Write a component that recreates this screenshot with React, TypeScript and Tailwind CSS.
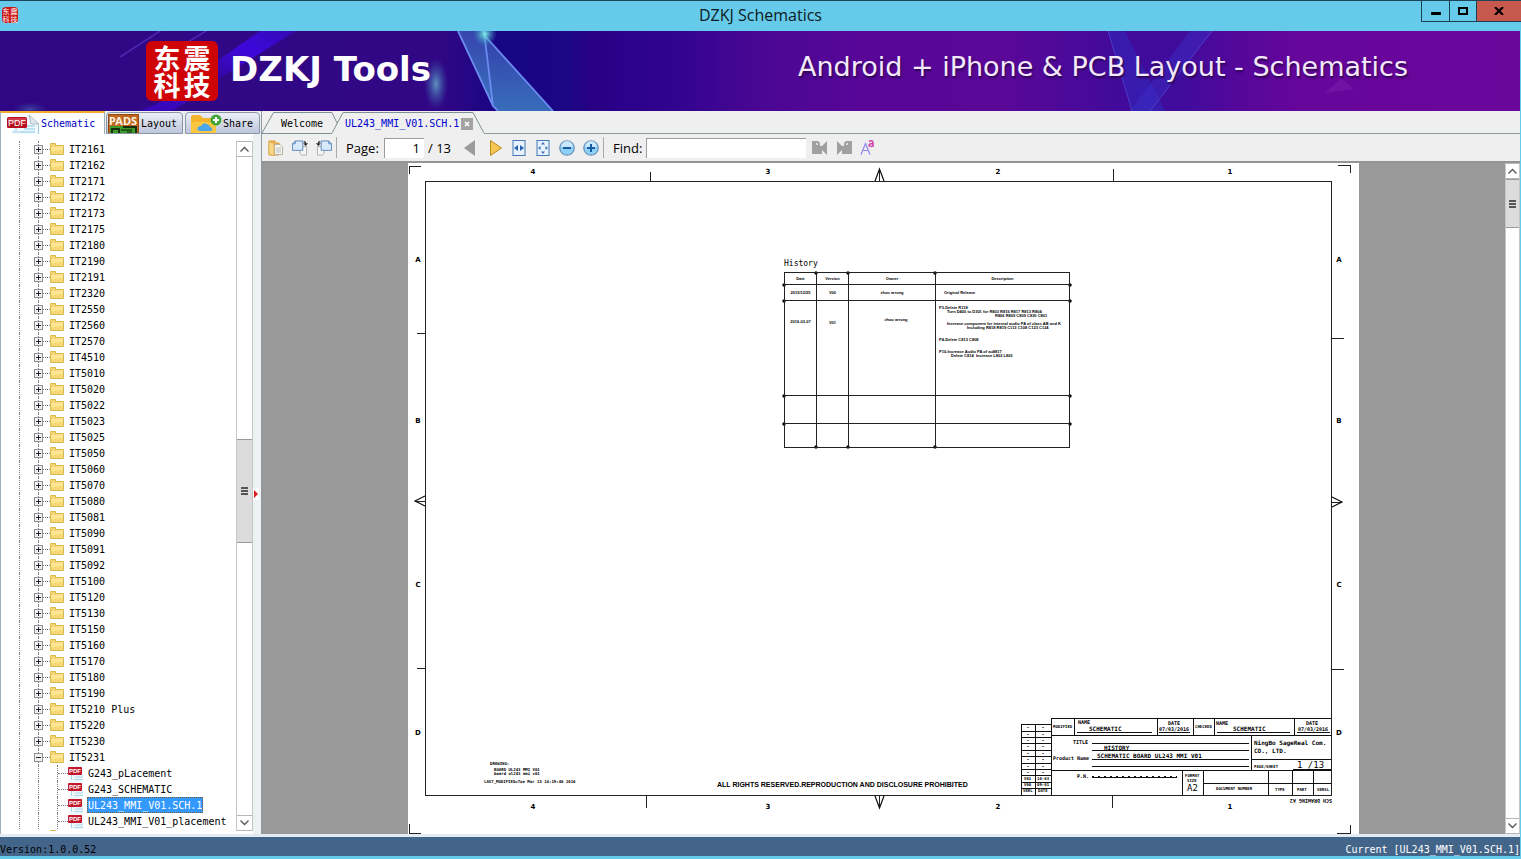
import { useState } from 'react'

const FOLDERS = [
    'IT2161', 'IT2162', 'IT2171', 'IT2172', 'IT2173', 'IT2175', 'IT2180', 'IT2190', 'IT2191', 'IT2320',
    'IT2550', 'IT2560', 'IT2570', 'IT4510', 'IT5010', 'IT5020', 'IT5022', 'IT5023', 'IT5025', 'IT5050',
    'IT5060', 'IT5070', 'IT5080', 'IT5081', 'IT5090', 'IT5091', 'IT5092', 'IT5100', 'IT5120', 'IT5130',
    'IT5150', 'IT5160', 'IT5170', 'IT5180', 'IT5190', 'IT5210 Plus', 'IT5220', 'IT5230', 'IT5231',
]

const FILES = ['G243_pLacement', 'G243_SCHEMATIC', 'UL243_MMI_V01.SCH.1', 'UL243_MMI_V01_placement']

const NOTES: { text: string, indent: string }[] = [
    { text: 'P3-Delete R118', indent: '' },
    { text: 'Turn D400 to D301 for R803 R816 R817 R813 R804', indent: 'pl-2' },
    { text: 'R806 R809 C809 C830 C801', indent: 'pl-14' },
    { text: '', indent: '' },
    { text: 'Increase component for internal audio PA of class AB and K', indent: 'pl-2' },
    { text: 'Including R818 R819 C113 C108 C123 C124', indent: 'pl-7' },
    { text: '', indent: '' },
    { text: '', indent: '' },
    { text: 'P4-Delete C813 C808', indent: '' },
    { text: '', indent: '' },
    { text: '', indent: '' },
    { text: 'P10-Increase Audio PA of au8817', indent: '' },
    { text: 'Delete C814  Increase L802 L803', indent: 'pl-3' },
]

/* ---------- icons ---------- */

const FolderIcon = () => (
    <svg width="14" height="14" viewBox="0 0 14 14" className="shrink-0" aria-hidden="true">
        <path d="M.5 2.500V1.500H5.500V3.500H13.500V12.500H.5Z" fill="#f3d673" stroke="#dcb850" />
        <path d="M1 5.500 13 4V12H1Z" fill="#fbe694" />
        <path d="M1 9 13 7.500V12H1Z" fill="#f5da77" />
    </svg>
)

const PdfFileIcon = () => (
    <svg width="15" height="16" viewBox="0 0 15 16" className="shrink-0" aria-hidden="true">
        <path d="M3 10V16H15V1L12 0H4Z" fill="#eef7fb" />
        <path d="M3.500 10V15M7 12H15M6 14.500H15" stroke="#a9d7ea" fill="none" />
        <rect x="0" y="2" width="14" height="8" rx="1" fill="#c3172b" />
        <text x="7" y="8" fontSize="6" fontWeight="700" textAnchor="middle" fill="#fff" className="font-['Liberation_Sans',sans-serif]">PDF</text>
    </svg>
)

const PdfTabIcon = () => (
    <svg width="33" height="20" viewBox="0 0 33 20" aria-hidden="true">
        <path d="M6 0H23L32 9V20H6Z" fill="#f2f8fb" />
        <path d="M22 1 32 10H24Z" fill="#dfe7ec" stroke="#9fb0ba" strokeWidth=".8" />
        <path d="M31.500 10V20M9 13V17M5 18H16" stroke="#9ccce4" fill="none" />
        <path d="M16 12H28M17 15H28M14 18H28" stroke="#a9d8ef" strokeWidth="1.500" />
        <rect x="0" y="3" width="20" height="11" rx="1.500" fill="#b80f1e" />
        <path d="M1 4H19V8Q10 9 1 8Z" fill="#d23c47" />
        <text x="10" y="12" fontSize="9" textAnchor="middle" fill="#fff" className="font-['Liberation_Sans',sans-serif]">PDF</text>
    </svg>
)

const PadsIcon = () => (
    <svg width="31" height="19" viewBox="0 0 31 19" aria-hidden="true">
        <rect x=".5" y=".5" width="30" height="19" fill="#c0661f" stroke="#8f4a12" />
        <rect x="2" y="12" width="27" height="7" fill="#3f9a2c" />
        <path d="M4 19V15H11V19M15 13H28V19" fill="none" stroke="#15300f" strokeWidth="2" />
        <path d="M13 16H24M19 18H24" stroke="#1c4a14" strokeWidth="1.500" />
        <text x="15" y="11" fontSize="11" fontWeight="700" textAnchor="middle" fill="#fdf3e0" className="font-['Noto_Sans',sans-serif]">PADS</text>
    </svg>
)

const ShareIcon = () => (
    <svg width="32" height="19" viewBox="0 0 32 19" aria-hidden="true">
        <path d="M1 3Q1 1 3 1H10L13 4H24Q26 4 26 6V19H1Z" fill="#f4b52c" />
        <path d="M1 8H26V19H3Q1 19 1 17Z" fill="#fbc740" />
        <path d="M10 17Q7 17 7.500 14Q8 12 11 12Q13 8 17 10Q20 11 20 13Q23 14 22 16Q22 17 20 17Z" fill="#4aa7ee" />
        <circle cx="26" cy="6" r="5.500" fill="#43a638" />
        <path d="M26 3V9M23 6H29" stroke="#fff" strokeWidth="2" />
    </svg>
)

const OpenIcon = () => (
    <svg width="16" height="16" viewBox="0 0 16 16" aria-hidden="true">
        <path d="M1 1H7V3H11V15H1Z" fill="#f0bd5c" stroke="#d39a33" />
        <path d="M6.500 4.500H12L14.500 7V14.500H6.500Z" fill="#f9f6ec" stroke="#b7b3a5" />
        <path d="M8 8H13M8 10H13M8 12H13" stroke="#b5bccb" />
        <path d="M1 1 6 4V16L1 14Z" fill="#f8d889" stroke="#d8a445" strokeWidth=".7" />
    </svg>
)

const RotateIcon = ({ left = false }: { left?: boolean }) => (
    <svg width="17" height="16" viewBox="0 0 17 16" className={left ? '-scale-x-100' : ''} aria-hidden="true">
        <path d="M8.500 6.500H15.500V15.500H10L8.500 13.500Z" fill="#f5f6f8" stroke="#a9adb5" />
        <path d="M3.500 .5H11.500V10.500H.5V3.500Z" fill="#d7eafb" stroke="#5c86b8" />
        <path d="M.5 3.500H3.500V.5" fill="none" stroke="#5c86b8" />
        <path d="M12.500 1.500H13.500Q14.500 1.500 14.500 3" fill="none" stroke="#222" strokeWidth="1.200" />
        <path d="M12 3H17L14.500 6Z" fill="#222" />
    </svg>
)

const FitIcon = ({ page = false }: { page?: boolean }) => (
    <svg width="14" height="16" viewBox="0 0 14 16" aria-hidden="true">
        <rect x="1" y=".5" width="12" height="15" fill="#e6f2fd" stroke="#4478b8" />
        {page ? (
            <path d="M7 2 9 4.500H5ZM7 14 9 11.500H5ZM2 8 4.500 6V10ZM12 8 9.500 6V10Z" fill="#3b74bd" />
        ) : (
            <path d="M2 8 6 5V11ZM12 8 8 5V11Z" fill="#2b62b0" />
        )}
    </svg>
)

const ZoomIcon = ({ plus = false }: { plus?: boolean }) => (
    <svg width="16" height="16" viewBox="0 0 16 16" aria-hidden="true">
        <circle cx="8" cy="8" r="7.200" fill="#8fd0f8" stroke="#6d93bb" strokeWidth="1.300" />
        <path d="M2 7A6 6 0 0 1 14 7Z" fill="#c8e8fc" />
        <path d={plus ? 'M4 8H12M8 4V12' : 'M4 8H12'} stroke="#155a9f" strokeWidth="2" />
    </svg>
)

const FindIcon = ({ next = false }: { next?: boolean }) => (
    <svg width="16" height="15" viewBox="0 0 16 15" className={next ? '-scale-x-100' : ''} aria-hidden="true">
        <path d="M0 1H6L8 3V6H10L15 1V15L10 10V14H0Z" fill="#a0a0a0" />
        <circle cx="5" cy="4" r="1" fill="#efefef" />
    </svg>
)

const MatchCaseIcon = () => (
    <svg width="15" height="17" viewBox="0 0 15 17" aria-hidden="true">
        <path d="M1 15.500 5.500 4.500 10 15.500M3 11.500H8" fill="none" stroke="#8f86ee" strokeWidth="1.200" />
        <path d="M9 2.500Q12.500 .5 13 3.500V8M13 4.500Q9 4.500 9 6.500Q10 8.500 13 6.500" fill="none" stroke="#cf3fa8" strokeWidth="1.500" />
    </svg>
)

const Chevron = ({ down = false }: { down?: boolean }) => (
    <svg width="9" height="6" viewBox="0 0 9 6" aria-hidden="true">
        <path d={down ? 'M.5 .5 4.500 4.500 8.500 .5' : 'M.5 5.500 4.500 1.500 8.500 5.500'} fill="none" stroke="#555" strokeWidth="1.300" />
    </svg>
)

/* ---------- window parts ---------- */

const TitleBar = () => (
    <header className="flex h-[31px] shrink-0 items-start border-t border-[#1d4459] bg-[#66caea]">
        <div className="flex w-[100px] shrink-0 pt-1.5 pl-0.5">
            <div className="grid size-4 grid-cols-2 place-items-center rounded-sm bg-[#cb1517] font-['Noto_Sans_CJK_SC',sans-serif] text-[7px] leading-[7px] text-white">
                <span>东</span><span>震</span><span>科</span><span>技</span>
            </div>
        </div>
        <h1 className="flex-1 pt-1 text-center font-['Open_Sans',sans-serif] text-[16px] leading-5 text-[#0c1a22]">DZKJ Schematics</h1>
        <div className="flex h-[21px] w-[100px] shrink-0 border-b border-l border-[#1c3f50]">
            <button aria-label="Minimize" className="flex w-7 items-center justify-center border-r border-[#1c3f50]">
                <span className="mt-1 h-[3px] w-2.5 bg-black" />
            </button>
            <button aria-label="Maximize" className="flex w-[27px] items-center justify-center border-r border-[#1c3f50]">
                <span className="h-2 w-2.5 border-2 border-black" />
            </button>
            <button aria-label="Close" className="flex flex-1 items-center justify-center bg-[#c6584e]">
                <svg width="10" height="8" viewBox="0 0 10 8"><path d="M1 0 9 8M9 0 1 8" stroke="#000" strokeWidth="2.200" /></svg>
            </button>
        </div>
    </header>
)

const Banner = () => (
    <div className="relative h-20 shrink-0 overflow-hidden bg-[linear-gradient(90deg,#2f0785_0px,#310785_440px,#170583_500px,#1c0785_570px,#270085_590px,#320490_680px,#4a0793_760px,#570698_860px,#5b0798_1000px,#430a9a_1110px,#3f0c9c_1180px,#55079a_1240px,#66069b_1300px,#6b069b_1521px)]">
        <svg width="1521" height="80" viewBox="0 0 1521 80" className="absolute inset-0" aria-hidden="true">
            <defs>
                <linearGradient id="shard" x1="0" y1="0" x2="0" y2="1">
                    <stop offset="0" stopColor="#3b4fb5" />
                    <stop offset="1" stopColor="#3f87c8" />
                </linearGradient>
                <radialGradient id="glow">
                    <stop offset="0" stopColor="#7df0e6" />
                    <stop offset="1" stopColor="#2f8fc0" stopOpacity="0" />
                </radialGradient>
                <linearGradient id="ray" x1="1" y1="0" x2="0" y2="1">
                    <stop offset="0" stopColor="#3a0be0" stopOpacity=".5" />
                    <stop offset=".5" stopColor="#3d08dc" />
                    <stop offset="1" stopColor="#3d08dc" stopOpacity=".3" />
                </linearGradient>
            </defs>
            <path d="M296 0 217 49V30L260 0Z" fill="url(#ray)" />
            <path d="M140 80 165 69H190L172 80Z" fill="#3d08dc" opacity=".6" />
            <path d="M206 0 150 34M160 0 120 26" stroke="#5b3fd0" strokeWidth="1.500" opacity=".6" />
            <ellipse cx="436" cy="53" rx="12" ry="26" fill="url(#glow)" opacity=".6" />
            <ellipse cx="30" cy="78" rx="18" ry="7" fill="url(#glow)" opacity=".25" />
            <path d="M458 0H484L493 75Z" fill="url(#shard)" opacity=".85" />
            <path d="M485 5 553 80H498L493 75Z" fill="url(#shard)" opacity=".8" />
            <path d="M458 0 493 75 498 80M484 0 493 75M485 5 553 80" fill="none" stroke="#6a8cf0" strokeWidth="1.800" />
            <circle cx="485" cy="3" r="12" fill="url(#glow)" />
            {/* streaks behind the tagline */}
            <path d="M1108 0 1132 80H1165L1125 0Z" fill="#2f2fc8" opacity=".45" />
            <path d="M1190 0 1130 80H1150L1212 0Z" fill="#3a2cc4" opacity=".5" />
            <path d="M1108 0 1132 80M1212 0 1150 80" stroke="#5a56dc" opacity=".6" />
            <path d="M1325 62 1341 47 1354 58Z" fill="#8526b4" opacity=".4" />
        </svg>
        <div className="relative flex h-full items-center justify-between pr-[112px] pl-[146px]">
            <div className="flex items-center gap-3">
                <div className="grid h-[60px] w-[72px] grid-cols-2 place-items-center rounded-md bg-[#cf0407] px-1.5 py-[3px] font-['Noto_Sans_CJK_SC',sans-serif] text-[27px] leading-[27px] font-bold text-white">
                    <span>东</span><span>震</span><span>科</span><span>技</span>
                </div>
                <p className="pb-1 font-['DejaVu_Sans',sans-serif] text-[34px] leading-10 font-bold text-white">DZKJ Tools</p>
            </div>
            <p className="pb-2 font-['DejaVu_Sans',sans-serif] text-[27px] leading-9 text-[#f3e9fa] [text-shadow:1px_2px_2px_#2b0350]">Android + iPhone &amp; PCB Layout - Schematics</p>
        </div>
    </div>
)

const ScrollBar = ({ before, thumb, className }: { before: string, thumb: string, className: string }) => (
    <div className={`flex shrink-0 flex-col border-x border-[#c4c6c8] bg-white ${className}`}>
        <button aria-label="Scroll up" className="flex h-4 shrink-0 items-center justify-center border-y border-[#b5b7b9]"><Chevron /></button>
        <div className={before} />
        <div className={`flex shrink-0 flex-col items-center justify-center gap-px border-y border-[#9a9a9a] bg-[#dcdcdc] ${thumb}`}>
            <span className="h-0.5 w-[7px] bg-[#555]" />
            <span className="h-0.5 w-[7px] bg-[#555]" />
            <span className="h-0.5 w-[7px] bg-[#555]" />
        </div>
        <div className="flex-1" />
        <button aria-label="Scroll down" className="flex h-4 shrink-0 items-center justify-center border-y border-[#b5b7b9]"><Chevron down /></button>
    </div>
)

const Tree = () => {
    const [selected, setSelected] = useState<string>('UL243_MMI_V01.SCH.1')

    return (
        <ul className="min-w-0 flex-1 overflow-hidden text-[10px] leading-4 text-black">
            {FOLDERS.map((name) => (
                <li key={name} className="flex h-4 items-center">
                    <span className="h-4 w-5 shrink-0 border-r border-dotted border-[#808080]" />
                    <span className="relative h-4 w-[19px] shrink-0 border-r border-dotted border-[#808080]">
                        <button aria-label={`Toggle ${name}`} className="absolute top-1 left-3.5 size-[9px] border border-[#919191] bg-[#f0f0f0]">
                            <span className="absolute inset-x-px top-[3px] h-px bg-[#223]" />
                            {name !== 'IT5231' && <span className="absolute inset-y-px left-[3px] w-px bg-[#223]" />}
                        </button>
                    </span>
                    <span className="h-px w-[11px] shrink-0 border-t border-dotted border-[#808080]" />
                    <FolderIcon />
                    <span className="pt-px pl-[5px] whitespace-pre">{name}</span>
                </li>
            ))}
            {FILES.map((name) => (
                <li key={name} className="flex h-4 items-center">
                    <span className="h-4 w-5 shrink-0 border-r border-dotted border-[#808080]" />
                    <span className="h-4 w-[19px] shrink-0 border-r border-dotted border-[#808080]" />
                    <span className="h-4 w-[19px] shrink-0 border-r border-dotted border-[#808080]" />
                    <span className="h-px w-[10px] shrink-0 border-t border-dotted border-[#808080]" />
                    <PdfFileIcon />
                    <button
                        onClick={() => setSelected(name)}
                        className={`ml-1 h-4 border border-dotted leading-[15px] ${selected === name ? 'border-[#7a5a30] bg-[#3399ff] text-white' : 'border-transparent'}`}
                    >
                        {name}
                    </button>
                </li>
            ))}
            <li className="flex h-4 items-start pl-[50px]"><FolderIcon /></li>
        </ul>
    )
}

const Sidebar = () => (
    <aside className="flex w-[262px] shrink-0 flex-col border-r border-[#8d9aa3] bg-[#eeeff1]">
        <div className="flex h-[23px] shrink-0 items-end text-[10px]">
            <button className="flex h-[23px] w-[105px] items-center gap-px border-t-2 border-x border-t-[#f3ab2e] border-x-[#9fb0ba] bg-white pl-1.5 whitespace-nowrap text-[#0000c8]">
                <PdfTabIcon />
                Schematic
            </button>
            <button className="ml-px flex h-[22px] w-[77px] items-center gap-0.5 rounded-t-sm border border-[#8a97a8] bg-linear-to-b from-[#eceff6] to-[#bfc6dc] pt-px pl-px text-black">
                <PadsIcon />
                Layout
            </button>
            <button className="ml-0.5 flex h-[22px] w-[75px] items-center gap-px rounded-t-sm border border-[#8a97a8] bg-linear-to-b from-[#eceff6] to-[#bfc6dc] pt-px pl-1 text-black">
                <ShareIcon />
                Share
            </button>
        </div>
        <div className="flex min-h-0 flex-1">
            <div className="flex min-w-0 flex-1 border-l border-[#9fb0ba] bg-white pt-[7px] pb-[3px]">
                <div className="-ml-px flex min-w-0 flex-1"><Tree /></div>
                <ScrollBar className="w-[17px]" before="h-[282px] shrink-0" thumb="h-[104px]" />
            </div>
            <div className="flex w-2 shrink-0 items-center bg-[#eef1f2] pt-5">
                <svg width="6" height="12" viewBox="0 0 6 12" aria-hidden="true">
                    <rect width="6" height="12" fill="#fff" />
                    <path d="M1 2 5 6 1 10Z" fill="#dc1c1c" />
                </svg>
            </div>
        </div>
    </aside>
)

const Slope = ({ d, w }: { d: string, w: number }) => (
    <svg width={w} height="21" viewBox={`0 0 ${w} 21`} className="shrink-0" aria-hidden="true">
        <path d={d} fill="none" stroke="#7d9095" />
    </svg>
)

const DocTabs = () => (
    <div className="flex h-[23px] shrink-0 items-end bg-[#efefef] text-[10px]">
        <button className="flex border-b border-[#7d9095] text-black">
            <Slope w={12} d="M0 21 11.500 .5H12" />
            <span className="w-[58px] border-t border-[#7d9095] pt-0.5 pl-[7px] text-left leading-[18px]">Welcome</span>
        </button>
        <div className="relative flex pb-px">
            <Slope w={11} d="M0 21 11 .5M0 .5 5 11" />
            <button className="w-[117px] border-t border-[#7d9095] pt-0.5 pl-0.5 text-left leading-[18px] text-[#0000d0]">UL243_MMI_V01.SCH.1</button>
            <button aria-label="Close tab" className="flex w-[13px] items-center justify-center border-t border-[#7d9095] pt-0.5">
                <svg width="12" height="12" viewBox="0 0 12 12">
                    <rect width="12" height="12" fill="#a3a3a3" />
                    <path d="M4 4 8 8M8 4 4 8" stroke="#fff" strokeWidth="1.500" />
                </svg>
            </button>
            <Slope w={11} d="M0 .5 11 21" />
        </div>
        <div className="h-px flex-1 bg-[#8f9da1]" />
    </div>
)

const Toolbar = () => {
    const [page, setPage] = useState('1')
    const [find, setFind] = useState('')

    return (
        <div className="flex h-[29px] shrink-0 items-center border-b-2 border-[#949494] bg-[#efefef] pl-1.5 font-['Open_Sans',sans-serif] text-[13px] text-black">
            <div className="flex gap-2">
                <button aria-label="Open" className="flex w-4"><OpenIcon /></button>
                <button aria-label="Rotate right" className="flex w-4"><RotateIcon /></button>
                <button aria-label="Rotate left" className="flex w-4"><RotateIcon left /></button>
            </div>
            <span className="ml-1 h-[21px] w-px bg-[#a9a9a9]" />
            <label htmlFor="page" className="ml-[9px] w-[38px] pt-0.5">Page:</label>
            <input id="page" value={page} onChange={(e) => setPage(e.target.value)} className="h-5 w-10 border-t border-l border-[#9b9b9b] bg-white pr-1 text-right outline-none" />
            <span className="ml-1 w-9 pt-0.5 whitespace-nowrap">/ 13</span>
            <button aria-label="Previous page" className="flex w-3">
                <svg width="12" height="16" viewBox="0 0 12 16"><path d="M0 8 11 0V16Z" fill="#9b9b9b" /></svg>
            </button>
            <button aria-label="Next page" className="ml-3.5 flex w-3">
                <svg width="12" height="16" viewBox="0 0 12 16"><path d="M.5 .5 11.500 8 .5 15.500Z" fill="#f6c653" stroke="#b98a1c" /></svg>
            </button>
            <div className="ml-[9px] flex gap-2">
                <button aria-label="Fit width" className="flex w-4 justify-center"><FitIcon /></button>
                <button aria-label="Fit page" className="flex w-4 justify-center"><FitIcon page /></button>
                <button aria-label="Zoom out" className="flex w-4 justify-center"><ZoomIcon /></button>
                <button aria-label="Zoom in" className="flex w-4 justify-center"><ZoomIcon plus /></button>
            </div>
            <span className="ml-1 h-[21px] w-px bg-[#a9a9a9]" />
            <label htmlFor="find" className="ml-[9px] w-[33px] pt-0.5">Find:</label>
            <input id="find" value={find} onChange={(e) => setFind(e.target.value)} className="h-5 w-40 border-t border-l border-[#9b9b9b] bg-white px-1 outline-none" />
            <button aria-label="Find previous" className="ml-1.5 flex"><FindIcon /></button>
            <button aria-label="Find next" className="ml-2 flex"><FindIcon next /></button>
            <button aria-label="Match case" className="ml-2 flex"><MatchCaseIcon /></button>
        </div>
    )
}

/* ---------- schematic sheet ---------- */

const COLS: [number, string][] = [[533, '4'], [768, '3'], [998, '2'], [1230, '1']]
const ROWS: [number, string][] = [[262, 'A'], [423, 'B'], [587, 'C'], [735, 'D']]
const REVS = [724, 731, 737, 743, 750, 756, 763, 769]

// junction dots of the history table
const DOTS: [number, number][] = [
    [816, 273], [848, 273], [935, 273],
    [784, 285], [1070, 285], [784, 301], [1070, 301], [784, 396], [1070, 396], [784, 424], [1070, 424],
    [816, 447], [848, 447], [935, 447],
]

const SheetDrawing = () => (
    <svg width="951" height="671" viewBox="408 163 951 671" className="block font-['DejaVu_Sans_Mono',monospace]" fill="#000">
        <g fill="none" stroke="#222" shapeRendering="crispEdges">
            <path d="M409 174V166H421M1338 165H1350V173M409 824V833H421M1337 833H1350V825" />
            <rect x="425" y="181" width="906" height="614" />
            <path d="M650 172V181M1113 169V181M646 795V808M1112 795V808M879 169V181M879 795V808" />
            <path d="M417 333H425M417 668H425M1331 338H1344M1331 669H1344M415 501H425M1331 502H1342" />
        </g>
        <path d="M875 181 879.500 169 884 181M875 796 879.500 808 884 796M425 496 415 501 425 506M1332 497 1342 502 1332 507" fill="none" stroke="#111" strokeWidth="1.200" />

        <g fontSize="7" fontWeight="700" textAnchor="middle" className="font-['DejaVu_Sans',sans-serif]">
            {COLS.map(([x, n]) => (
                <g key={n}>
                    <text x={x} y="174">{n}</text>
                    <text x={x} y="809">{n}</text>
                </g>
            ))}
            {ROWS.map(([y, n]) => (
                <g key={n}>
                    <text x="418" y={y}>{n}</text>
                    <text x="1339" y={y}>{n}</text>
                </g>
            ))}
        </g>

        {DOTS.map(([x, y]) => <circle key={`${x}-${y}`} cx={x} cy={y} r="1.700" />)}

        {/* title block */}
        <g fill="none" stroke="#111" shapeRendering="crispEdges">
            <path d="M1021 795V724H1051M1035 724V795M1021 731H1051M1021 737H1051M1021 743H1051M1021 750H1051M1021 756H1051M1021 763H1051M1021 769H1051M1021 775H1051M1021 782H1051M1021 788H1051" />
            <path d="M1051 795V718H1331M1051 735H1331M1051 770H1331M1074 718V735M1157 718V735M1193 718V735M1214 718V735M1294 718V735" />
            <path d="M1251 735V770M1251 759H1331M1182 770V795M1203 770V795M1203 783H1331M1268 770V795M1292 770V795M1313 770V795" />
            <path d="M1077 732H1152M1159 732H1190M1217 732H1290M1297 732H1330M1092 743H1249M1092 750H1249M1092 759H1249M1092 766H1249M1293 769H1331" />
            <path d="M1092 777H1177" />
            <path d="M1092 776H1177" strokeDasharray="2 4" />
        </g>
        <g fontSize="5" fontWeight="700">
            {REVS.map((y) => (
                <g key={y} textAnchor="middle">
                    <text x="1028" y={y + 5}>-</text>
                    <text x="1043" y={y + 5}>-</text>
                </g>
            ))}
            <text x="1078" y="724">NAME</text>
            <text x="1168" y="725">DATE</text>
            <text x="1159" y="731">07/03/2016</text>
            <text x="1216" y="725">NAME</text>
            <text x="1306" y="725">DATE</text>
            <text x="1298" y="731">07/03/2016</text>
            <text x="1073" y="744">TITLE</text>
            <text x="1053" y="760">Product Name</text>
            <text x="1077" y="778">P.N.</text>
            <text x="1332" y="799" transform="rotate(180 1332 799)">SCH DRAWING A2</text>
        </g>
        <g fontSize="4" fontWeight="700">
            <text x="1024" y="780">V01</text>
            <text x="1037" y="780">10-03</text>
            <text x="1024" y="786">V00</text>
            <text x="1037" y="786">09-01</text>
            <text x="1023" y="792">VERL</text>
            <text x="1038" y="792">DATE</text>
            <text x="1053" y="728">MODIFIED</text>
            <text x="1195" y="728">CHECKED</text>
            <text x="1254" y="768">PAGE/SHEET</text>
            <text x="1185" y="777">FORMAT</text>
            <text x="1187" y="782">SIZE</text>
            <text x="1216" y="790">DOCUMENT NUMBER</text>
            <text x="1275" y="791">TYPE</text>
            <text x="1297" y="791">PART</text>
            <text x="1317" y="791">VERSL</text>
            <text x="490" y="765">DRAWING:</text>
            <text x="494" y="771">BOARD UL243 MMI V01</text>
            <text x="494" y="775">board ul243 mmi v01</text>
            <text x="484" y="783">LAST_MODIFIED=Tue Mar 15 14:19:46 2016</text>
        </g>
        <g fontSize="6" fontWeight="700">
            <text x="1089" y="731">SCHEMATIC</text>
            <text x="1233" y="731">SCHEMATIC</text>
            <text x="1104" y="750">HISTORY</text>
            <text x="1097" y="758">SCHEMATIC BOARD UL243 MMI V01</text>
            <text x="1254" y="745">NingBo SageReal Com.</text>
            <text x="1254" y="753">CO., LTD.</text>
        </g>
        <g fontSize="9">
            <text x="1187" y="791">A2</text>
            <text x="1297" y="768">1 /13</text>
        </g>
        <text x="717" y="787" fontSize="7" fontWeight="700" className="font-['Liberation_Sans',sans-serif]">ALL RIGHTS RESERVED.REPRODUCTION AND DISCLOSURE PROHIBITED</text>
    </svg>
)

const HistoryTable = () => (
    <table className="absolute top-[99px] left-[376px] w-[286px] table-fixed border-collapse font-['Liberation_Sans',sans-serif] text-[4px] leading-[4px] font-bold text-black [&_td]:border [&_td]:border-[#222] [&_td]:p-0 [&_th]:border [&_th]:border-[#222] [&_th]:p-0">
        <caption className="h-2.5 text-left font-['DejaVu_Sans_Mono',monospace] text-[8px] leading-[4px] font-normal">History</caption>
        <colgroup>
            <col className="w-8" />
            <col className="w-8" />
            <col className="w-[87px]" />
            <col />
        </colgroup>
        <thead>
            <tr className="h-3">
                <th>Date</th>
                <th>Version</th>
                <th>Owner</th>
                <th>Description</th>
            </tr>
        </thead>
        <tbody>
            <tr className="h-4 text-center">
                <td>2015/12/25</td>
                <td>V00</td>
                <td>zhou arrong</td>
                <td className="text-left"><div className="pl-2">Original Release</div></td>
            </tr>
            <tr className="h-[95px] text-center align-top">
                <td><div className="pt-[19px]">2016-03-07</div></td>
                <td><div className="pt-5">V01</div></td>
                <td><div className="pt-[17px] pl-2">zhou arrong</div></td>
                <td className="text-left">
                    <div className="pt-[5px] pl-[3px] whitespace-pre">
                        {NOTES.map((n, i) => <p key={i} className={`h-1 ${n.indent}`}>{n.text}</p>)}
                    </div>
                </td>
            </tr>
            <tr className="h-7"><td /><td /><td /><td /></tr>
            <tr className="h-6"><td /><td /><td /><td /></tr>
        </tbody>
    </table>
)

const Viewer = () => (
    <main className="flex min-w-0 flex-1 flex-col">
        <DocTabs />
        <Toolbar />
        <div className="flex min-h-0 flex-1">
            <div className="flex min-w-0 flex-1 items-start justify-center overflow-hidden bg-[#999]">
                <div className="relative shrink-0 bg-white">
                    <SheetDrawing />
                    <HistoryTable />
                </div>
            </div>
            <ScrollBar className="w-[15px]" before="h-0" thumb="h-[49px]" />
        </div>
    </main>
)

const App = () => {
    return (
        <div className="flex h-screen flex-col overflow-hidden bg-[#66caea] font-['DejaVu_Sans_Mono',monospace]">
            <TitleBar />
            <div className="mr-px flex min-h-0 flex-1 flex-col">
                <Banner />
                <div className="flex min-h-0 flex-1">
                    <Sidebar />
                    <Viewer />
                </div>
                <footer className="flex h-[22px] shrink-0 items-center justify-between border-t-3 border-[#e3ecf5] bg-[#43658a] pt-1.5 text-[10px] leading-4">
                    <span className="text-black">Version:1.0.0.52</span>
                    <span className="text-white">Current [UL243_MMI_V01.SCH.1]</span>
                </footer>
            </div>
            <div className="h-[3px] shrink-0" />
        </div>
    )
}

export default App
